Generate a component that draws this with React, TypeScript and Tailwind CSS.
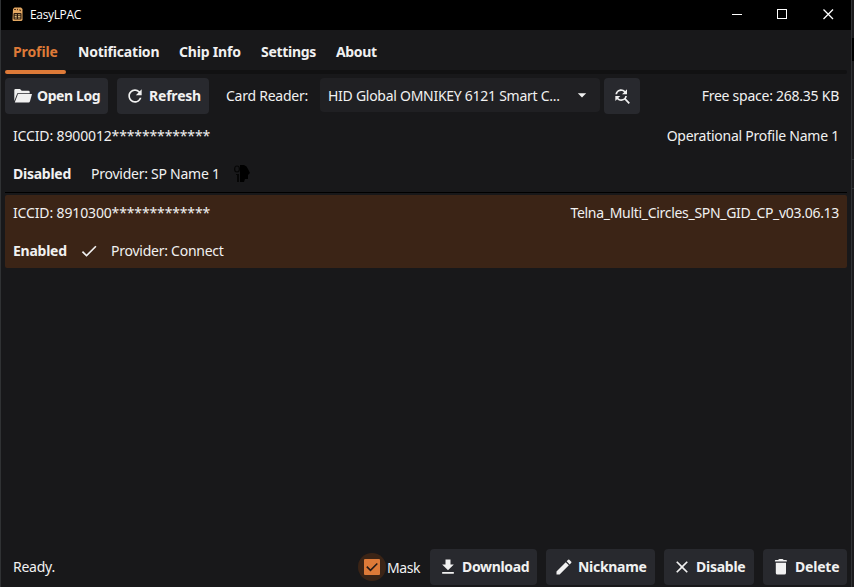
import type { ReactNode } from "react";
import {
  MdRefresh,
  MdFindReplace,
  MdArrowDropDown,
  MdCheck,
  MdGetApp,
  MdEdit,
  MdClose,
} from "react-icons/md";

function Button({ className, icon, children }: { className: string; icon: ReactNode; children: ReactNode }) {
  return (
    <button className={`flex h-9 shrink-0 items-center whitespace-nowrap rounded bg-[#28292e] pl-2 font-bold ${className}`}>
      {icon}
      <span className="ml-1">{children}</span>
    </button>
  );
}

function AppIcon() {
  return (
    <svg width="12" height="15" viewBox="0 0 12 15" className="mb-px shrink-0">
      <path d="M1 2 2.5 0.5H9L10.5 2V13L9.5 14H1L0.5 13Z" fill="#e3a862" />
      <path d="M2 2.5h2M5.5 1.8v1.4M7 3h1.5v1.2" stroke="#5a3519" strokeWidth="1" fill="none" />
      <rect x="1.5" y="6" width="8" height="6.5" rx="1" fill="#2d1b0e" />
      <path d="M2.7 7.8h2.2M2.7 9.5h2M2.7 11h2.2M6 7.8h2.4M6 9.5h2.4M6 11h2.4" stroke="#f0cc86" strokeWidth="0.9" fill="none" />
    </svg>
  );
}

function OpenFolderIcon() {
  return (
    <svg width="20" height="20" viewBox="0 0 20 20" fill="currentColor">
      <path d="M1.3 4.2Q1.3 3 2.5 3H7l1.7 1.8h6.8q1.2 0 1.2 1.2v1.2H4.3L1.3 15Z" />
      <path d="M4.9 8.1H19L16.9 15.6Q16.6 16.6 15.6 16.6H1.8Z" />
    </svg>
  );
}

function TrashIcon() {
  return (
    <svg width="20" height="20" viewBox="0 0 20 20" fill="currentColor">
      <path d="M3.9 3.7Q3.9 3 4.7 3H7.2Q7.6 2 8.5 2H11.3Q12.2 2 12.6 3H15.1Q15.9 3 15.9 3.7V4.6H3.9ZM4.8 5.8H15V16Q15 17.6 13.4 17.6H6.4Q4.8 17.6 4.8 16Z" />
    </svg>
  );
}

function CheckBox() {
  return (
    <svg width="28" height="28" viewBox="0 0 28 28">
      <circle cx="14" cy="14" r="14" fill="#3b2416" />
      <rect x="6" y="6" width="16" height="16" rx="1" fill="#de7a38" />
      <path d="m8.8 13.6 3.7 3.7 6.8-6.8" fill="none" stroke="#251a18" strokeWidth="1.6" />
    </svg>
  );
}

function ProviderIcon() {
  return (
    <svg width="18" height="20" viewBox="0 0 18 20" className="ml-[13px]">
      <path d="M7 1h4q3 1 4 4l2 4-2 2v4h-3l-1 3H7Z" fill="#000" />
      <ellipse cx="4" cy="5" rx="2.4" ry="3" fill="none" stroke="#060606" strokeWidth="1.2" />
      <path d="M3 10h3v8H4v-7H3Z" fill="#060606" />
    </svg>
  );
}

export default function App() {
  return (
    <div className="flex h-[587px] w-[854px] overflow-hidden bg-[#18181a] font-['Noto_Sans',sans-serif] text-[14px] leading-[20px] tracking-[-0.25px] text-[#f1f1f1]">
      <div className="w-px shrink-0 bg-[#303234]" />
      <div className="flex w-[850px] shrink-0 flex-col">
        <header className="flex h-[30px] shrink-0 items-center bg-black pl-[11px]">
          <AppIcon />
          <span className="ml-[6px] font-['Open_Sans',sans-serif] text-[12px] tracking-[-0.35px] text-white">EasyLPAC</span>
          <svg width="102" height="12" viewBox="0 0 102 12" className="mb-[2px] ml-auto mr-[17px]" fill="none" stroke="#fff">
            <path d="M0 6.5h10" />
            <path d="m91.5 1.5 9.5 9.5M101 1.5l-9.5 9.5" strokeWidth="1.3" />
            <rect x="45.5" y="1.5" width="9" height="9" />
          </svg>
        </header>
        <nav className="flex h-10 shrink-0 items-center pl-3 pt-[4px] font-bold tracking-[-0.2px]">
          <span className="w-[65px] tracking-[-0.1px] text-[#de7a38]">Profile</span>
          <span className="w-[101px]">Notification</span>
          <span className="w-[82px]">Chip Info</span>
          <span className="w-[75px] tracking-[-0.3px]">Settings</span>
          <span className="tracking-[-0.35px]">About</span>
        </nav>
        <div className="mx-1 h-1 shrink-0 rounded-sm bg-[#111112]">
          <div className="h-1 w-[61px] rounded-sm bg-[#de7a38]" />
        </div>
        <div className="mt-1 flex h-10 shrink-0 items-start px-1">
          <Button className="w-[103px] tracking-[-0.4px]" icon={<OpenFolderIcon />}>Open Log</Button>
          <Button className="ml-[9px] w-[92px] tracking-[-0.2px]" icon={<MdRefresh size={20} />}>Refresh</Button>
          <span className="ml-[17px] mt-2 w-[94px]">Card Reader:</span>
          <div className="flex h-[34px] w-[280px] items-center rounded bg-[#202023] pl-2 pr-2">
            <span className="pt-[2px] tracking-[-0.27px]">HID Global OMNIKEY 6121 Smart C...</span>
            <MdArrowDropDown size={20} className="ml-auto" />
          </div>
          <button className="ml-1 flex size-9 items-center justify-center rounded bg-[#28292e]">
            <MdFindReplace size={20} />
          </button>
          <span className="ml-auto mr-2 mt-2">Free space: 268.35 KB</span>
        </div>
        <main className="mx-1 flex grow flex-col">
          <section className="h-[74px] px-2 pt-2">
            <div className="flex justify-between">
              <span className="tracking-[-0.14px]">ICCID: 8900012*************</span>
              <span>Operational Profile Name 1</span>
            </div>
            <div className="mt-[18px] flex h-5 items-center">
              <b className="w-[78px]">Disabled</b>
              <span>Provider: SP Name 1</span>
              <ProviderIcon />
            </div>
          </section>
          <div className="mb-[2px] h-px bg-black" />
          <section className="h-[73px] rounded-xs bg-[#3b2416] px-2 pt-2">
            <div className="flex justify-between">
              <span className="tracking-[-0.14px]">ICCID: 8910300*************</span>
              <span className="tracking-[-0.3px]">Telna_Multi_Circles_SPN_GID_CP_v03.06.13</span>
            </div>
            <div className="mt-[18px] flex h-5 items-center">
              <b className="w-[66px]">Enabled</b>
              <MdCheck size={20} />
              <span className="ml-3">Provider: Connect</span>
            </div>
          </section>
        </main>
        <footer className="flex h-[38px] shrink-0 items-start pl-3 pr-1">
          <span className="mt-2">Ready.</span>
          <div className="ml-auto flex h-9 items-center">
            <CheckBox />
            <span className="ml-px mt-[2px] w-[43px] tracking-[-0.4px]">Mask</span>
          </div>
          <Button className="w-[107px] tracking-[-0.32px]" icon={<MdGetApp size={20} />}>Download</Button>
          <Button className="ml-[9px] w-[109px] tracking-[-0.3px]" icon={<MdEdit size={20} />}>Nickname</Button>
          <Button className="ml-[9px] w-[90px] tracking-[-0.25px]" icon={<MdClose size={20} />}>Disable</Button>
          <Button className="ml-[9px] w-[84px] tracking-[-0.2px]" icon={<TrashIcon />}>Delete</Button>
        </footer>
      </div>
      <div className="flex w-[3px] flex-col border-l border-[#303234] bg-[#1c1b1d]">
        <div className="mt-[38px] h-[23px] bg-black" />
        <div className="mt-[98px] h-px bg-[#303234]" />
        <div className="mt-7 h-px bg-[#303234]" />
      </div>
    </div>
  );
}
